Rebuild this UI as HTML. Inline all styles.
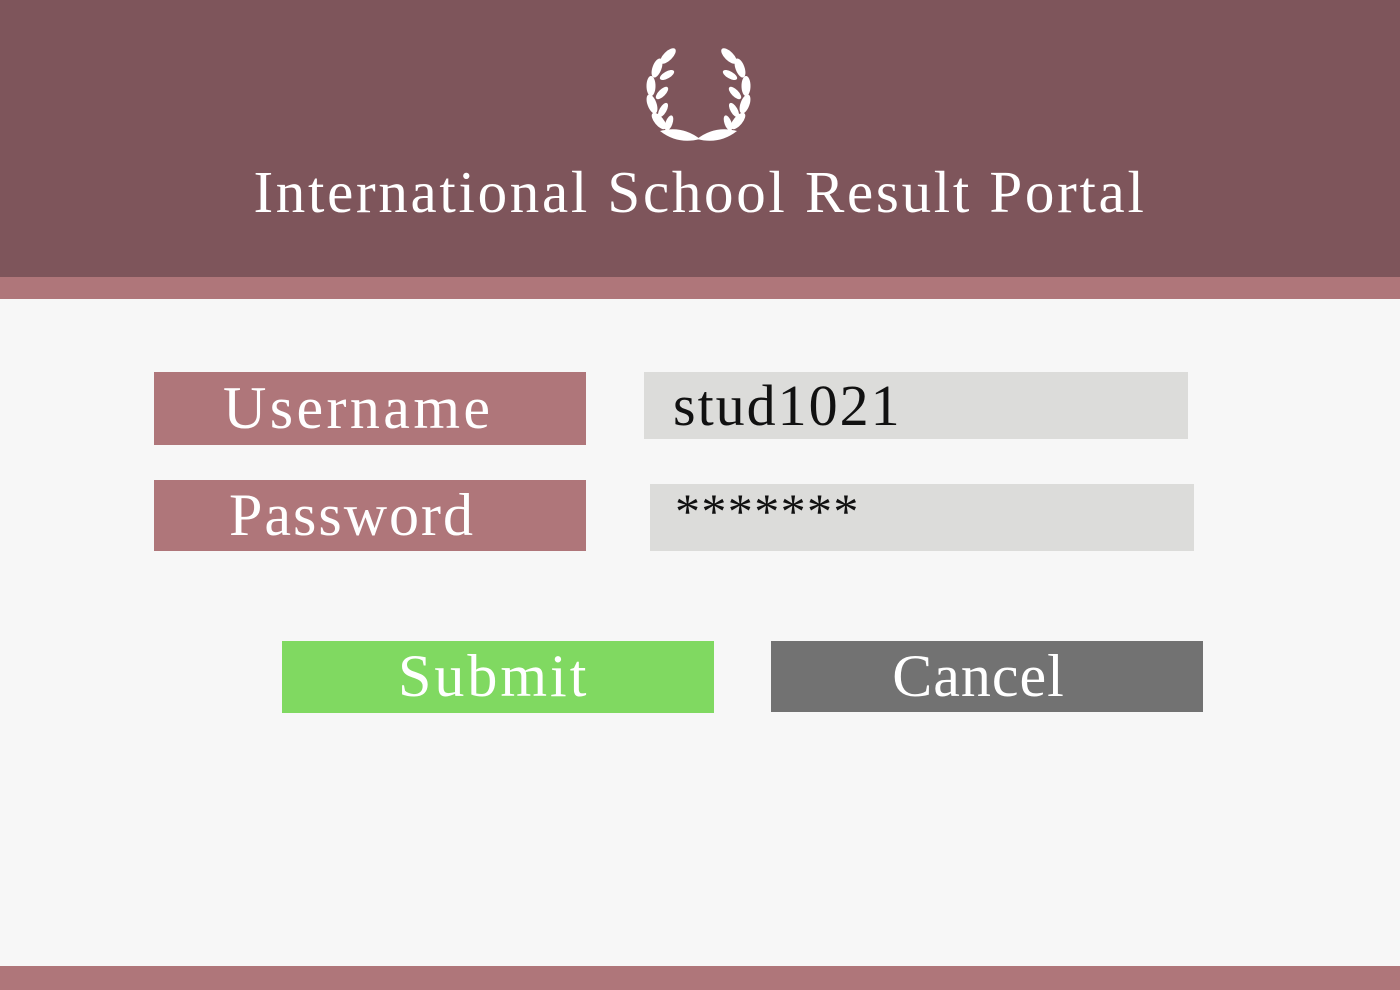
<!DOCTYPE html>
<html><head><meta charset="utf-8"><style>
*{margin:0;padding:0;box-sizing:border-box}
body{width:1400px;height:990px;background:#f7f7f7;position:relative;overflow:hidden;font-family:"Liberation Serif",serif}
.hdr{position:absolute;left:0;top:0;width:1400px;height:277px;background:#7e555b}
.band{position:absolute;left:0;width:1400px;background:#af767a}
.t{position:absolute;white-space:nowrap;line-height:1}
.box{position:absolute}
</style></head><body>
<div class="hdr"></div>
<div class="band" style="top:277px;height:22px"></div>
<div class="band" style="top:966px;height:24px"></div>
<svg style="position:absolute;left:0;top:0" width="1400" height="160">
<g fill="#fff">
<g id="L">
<ellipse cx="668" cy="56" rx="4.5" ry="10" transform="rotate(45 668 56)"/>
<ellipse cx="657" cy="68" rx="4.5" ry="10" transform="rotate(20 657 68)"/>
<ellipse cx="667" cy="75" rx="3.5" ry="8" transform="rotate(60 667 75)"/>
<ellipse cx="651" cy="86" rx="4.5" ry="10" transform="rotate(0 651 86)"/>
<ellipse cx="662" cy="93" rx="3.5" ry="8" transform="rotate(45 662 93)"/>
<ellipse cx="652" cy="104" rx="4.5" ry="10" transform="rotate(-20 652 104)"/>
<ellipse cx="663" cy="110" rx="3.5" ry="8" transform="rotate(30 663 110)"/>
<ellipse cx="659" cy="121" rx="4.5" ry="10" transform="rotate(-40 659 121)"/>
<ellipse cx="669" cy="123" rx="3.5" ry="8" transform="rotate(20 669 123)"/>
<path d="M660 131 q22-6 40 8 q-22 6 -40 -8z"/>
</g>
<use href="#L" transform="translate(1397 0) scale(-1 1)"/>
</g>
</svg>
<div class="t" style="left:0;width:1400px;text-align:center;top:163px;font-size:59px;color:#fff;letter-spacing:2.7px">International School Result Portal</div>
<div class="box" style="left:154px;top:372px;width:432px;height:73px;background:#af767a"></div>
<div class="box" style="left:154px;top:480px;width:432px;height:71px;background:#af767a"></div>
<div class="box" style="left:644px;top:372px;width:544px;height:67px;background:#dcdcda"></div>
<div class="box" style="left:650px;top:484px;width:544px;height:67px;background:#dcdcda"></div>
<div class="box" style="left:282px;top:641px;width:432px;height:72px;background:#80d961"></div>
<div class="box" style="left:771px;top:641px;width:432px;height:71px;background:#727272"></div>
<div class="t" style="left:223px;top:378px;font-size:60px;color:#fff;letter-spacing:3.4px">Username</div>
<div class="t" style="left:229px;top:485px;font-size:60px;color:#fff;letter-spacing:2px">Password</div>
<div class="t" style="left:673px;top:377px;font-size:58px;color:#111;letter-spacing:2px">stud1021</div>
<div class="t" style="left:675px;top:486px;font-size:50px;color:#111;letter-spacing:1.4px">*******</div>
<div class="t" style="left:398px;top:646px;font-size:60px;color:#fff;letter-spacing:3px">Submit</div>
<div class="t" style="left:771px;width:415px;text-align:center;top:646px;font-size:60px;color:#fff;letter-spacing:1px">Cancel</div>
</body></html>
